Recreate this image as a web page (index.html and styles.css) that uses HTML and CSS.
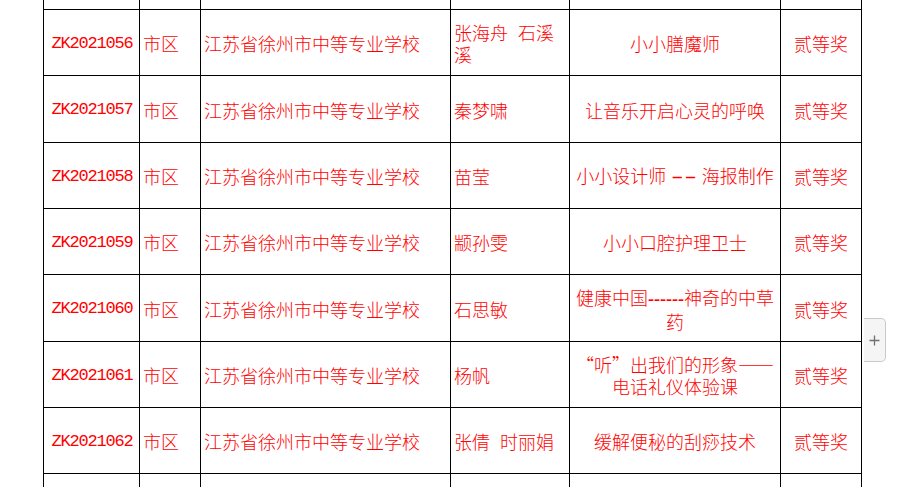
FILE: index.html
```html
<!DOCTYPE html>
<html lang="zh-CN">
<head>
<meta charset="utf-8">
<title>获奖名单</title>
<link rel="stylesheet" href="styles.css">
</head>
<body>
<div class="sheet">
  <table class="awards">
    <colgroup>
      <col class="c-id"><col class="c-area"><col class="c-school"><col class="c-name"><col class="c-title"><col class="c-prize">
    </colgroup>
    <tbody>
      <tr class="r-a"><td></td><td></td><td></td><td></td><td></td><td></td></tr>
      <tr class="r-a">
        <td class="id">ZK2021056</td><td class="tx">市区</td><td class="tx">江苏省徐州市中等专业学校</td>
        <td class="tx nm">张海舟 石溪溪</td><td class="ct">小小膳魔师</td><td class="ct">贰等奖</td>
      </tr>
      <tr class="r-b">
        <td class="id">ZK2021057</td><td class="tx">市区</td><td class="tx">江苏省徐州市中等专业学校</td>
        <td class="tx nm">秦梦啸</td><td class="ct">让音乐开启心灵的呼唤</td><td class="ct">贰等奖</td>
      </tr>
      <tr class="r-a">
        <td class="id">ZK2021058</td><td class="tx">市区</td><td class="tx">江苏省徐州市中等专业学校</td>
        <td class="tx nm">苗莹</td><td class="ct">小小设计师<span class="dd">--</span>海报制作</td><td class="ct">贰等奖</td>
      </tr>
      <tr class="r-a">
        <td class="id">ZK2021059</td><td class="tx">市区</td><td class="tx">江苏省徐州市中等专业学校</td>
        <td class="tx nm">颛孙雯</td><td class="ct">小小口腔护理卫士</td><td class="ct">贰等奖</td>
      </tr>
      <tr class="r-b">
        <td class="id">ZK2021060</td><td class="tx">市区</td><td class="tx">江苏省徐州市中等专业学校</td>
        <td class="tx nm">石思敏</td><td class="ct">健康中国<span class="hy">------</span>神奇的中草药</td><td class="ct">贰等奖</td>
      </tr>
      <tr class="r-a">
        <td class="id">ZK2021061</td><td class="tx">市区</td><td class="tx">江苏省徐州市中等专业学校</td>
        <td class="tx nm">杨帆</td><td class="ct"><span class="fw">“听”</span>出我们的形象——电话礼仪体验课</td><td class="ct">贰等奖</td>
      </tr>
      <tr class="r-a">
        <td class="id">ZK2021062</td><td class="tx">市区</td><td class="tx">江苏省徐州市中等专业学校</td>
        <td class="tx nm">张倩 时丽娟</td><td class="ct">缓解便秘的刮痧技术</td><td class="ct">贰等奖</td>
      </tr>
      <tr class="r-a"><td></td><td></td><td></td><td></td><td></td><td></td></tr>
    </tbody>
  </table>
</div>
<div class="side-tab" aria-label="展开">
  <svg width="11" height="11" viewBox="0 0 11 11"><path d="M5.5 0.5v10M0.5 5.5h10" stroke="#707070" stroke-width="1.3" fill="none"/></svg>
</div>
</body>
</html>
```
FILE: styles.css
```css
html, body {
  margin: 0;
  padding: 0;
  background: #ffffff;
  overflow: hidden;
  height: 487px;
}
.sheet {
  height: 487px;
  overflow: hidden;
  padding-left: 43px;
}
.awards {
  border-collapse: collapse;
  table-layout: fixed;
  width: 818px;
  margin-top: -57px;
  font-family: "Noto Sans CJK SC", sans-serif;
  font-weight: 300;
  font-size: 18px;
  line-height: 22px;
  color: #ff0000;
}
.c-id { width: 96px; }
.c-area { width: 61px; }
.c-school { width: 250px; }
.c-name { width: 119px; }
.c-title { width: 211px; }
.c-prize { width: 81px; }
.awards td {
  border: 1px solid #000;
  padding: 1px 5px 0 5px;
  vertical-align: middle;
}
.r-a { height: 66px; }
.r-b { height: 67px; }
.id {
  text-align: center;
  font-family: "Liberation Mono", monospace;
  font-weight: 400;
  font-size: 17px;
  letter-spacing: -1.2px;
  padding: 2px 0 0 1px !important;
}
.awards td.tx { text-align: left; padding-left: 3px; }
.nm { word-spacing: 6px; }
.ct { text-align: center; }
.dd {
  display: inline-block;
  font-family: "Liberation Sans", sans-serif;
  font-weight: 400;
  letter-spacing: 0.3px;
  transform: scaleX(2.1);
  margin: 0 11px 0 12px;
}
.hy {
  font-family: "Liberation Serif", serif;
  font-weight: bold;
}
.fw { font-feature-settings: "fwid" 1; }
.side-tab {
  position: absolute;
  left: 864px;
  top: 318px;
  width: 22px;
  height: 44px;
  box-sizing: border-box;
  background: #f5f5f5;
  border: 1px solid #c9c9c9;
  border-left: none;
  border-radius: 0 5px 5px 0;
  display: flex;
  align-items: center;
  justify-content: center;
}
```
